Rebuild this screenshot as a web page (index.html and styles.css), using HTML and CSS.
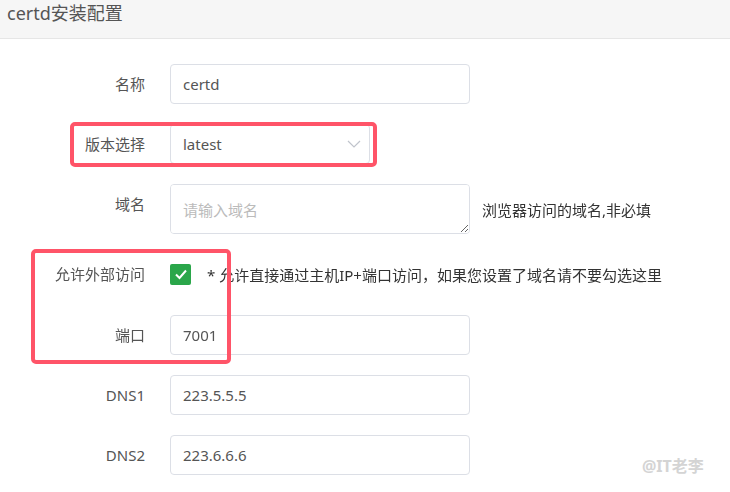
FILE: index.html
```html
<!DOCTYPE html>
<html lang="zh">

<head>
    <meta charset="UTF-8">
    <meta name="viewport" content="width=device-width, initial-scale=1.0">
    <title>certd安装配置</title>
    <link rel="stylesheet" href="styles.css">
</head>

<body>
    <div class="header">
        <h1 class="title">certd安装配置</h1>
    </div>

    <form class="form">
        <div class="row">
            <label class="label">名称</label>
            <div class="field"><input class="input" type="text" value="certd"></div>
        </div>
        <div class="row">
            <label class="label">版本选择</label>
            <div class="field">
                <div class="select">
                    <span>latest</span>
                    <svg class="arrow" width="14" height="8" viewBox="0 0 14 8">
                        <path d="M1 1 L7 7 L13 1" fill="none" stroke="#c0c4cc" stroke-width="1.2"/>
                    </svg>
                </div>
            </div>
        </div>
        <div class="row row-area">
            <label class="label">域名</label>
            <div class="field">
                <textarea class="input textarea" placeholder="请输入域名"></textarea>
                <span class="hint">浏览器访问的域名,非必填</span>
            </div>
        </div>
        <div class="row row-check">
            <label class="label">允许外部访问</label>
            <div class="field">
                <span class="checkbox">
                    <svg width="14" height="12" viewBox="0 0 14 12">
                        <path d="M2 6.5 L5.5 10 L12 2.5" fill="none" stroke="#fff" stroke-width="2"/>
                    </svg>
                </span>
                <span class="hint check-hint">* 允许直接通过主机IP+端口访问，如果您设置了域名请不要勾选这里</span>
            </div>
        </div>
        <div class="row">
            <label class="label">端口</label>
            <div class="field"><input class="input" type="text" value="7001"></div>
        </div>
        <div class="row">
            <label class="label">DNS1</label>
            <div class="field"><input class="input" type="text" value="223.5.5.5"></div>
        </div>
        <div class="row">
            <label class="label">DNS2</label>
            <div class="field"><input class="input" type="text" value="223.6.6.6"></div>
        </div>
    </form>

    <div class="mark mark-version"></div>
    <div class="mark mark-access"></div>
    <div class="watermark">@IT老李</div>
</body>

</html>
```

FILE: styles.css
```css
* {
    margin: 0;
    padding: 0;
    box-sizing: border-box;
}

body {
    width: 730px;
    height: 492px;
    overflow: hidden;
    position: relative;
    background: #fff;
    font-family: "Noto Sans", "Noto Sans CJK SC", sans-serif;
    color: #555;
}

.header {
    height: 39px;
    background: #f6f6f6;
    border-bottom: 1px solid #e6e6e6;
    padding: 0 7px;
}

.title {
    font-size: 18px;
    font-weight: normal;
    line-height: 27px;
    color: #555;
}

.form {
    display: flex;
    flex-direction: column;
    gap: 20px;
    padding-top: 25px;
}

.row {
    display: grid;
    grid-template-columns: 145px 1fr;
    column-gap: 25px;
    align-items: start;
}

.row-check {
    height: 41px;
}

.label {
    text-align: right;
    font-size: 15px;
    line-height: 40px;
    color: #555;
}

.field {
    display: flex;
    align-items: center;
    min-height: 40px;
}

.input {
    width: 300px;
    height: 40px;
    border: 1px solid #dcdfe6;
    border-radius: 4px;
    padding: 0 12px;
    font-family: "Noto Sans", "Noto Sans CJK SC", sans-serif;
    font-size: 15px;
    color: #555;
    outline: none;
}

.textarea {
    height: 50px;
    padding: 12px 12px;
    font-size: 15px;
    line-height: 26px;
    resize: vertical;
}

.textarea::placeholder {
    color: #bbb;
}

.select {
    width: 200px;
    height: 40px;
    border: 1px solid #dcdfe6;
    border-radius: 4px;
    padding: 0 8px 0 12px;
    display: flex;
    align-items: center;
    justify-content: space-between;
    font-size: 15px;
}

.hint {
    font-size: 15px;
    color: #333;
    margin-left: 12px;
}

.checkbox {
    width: 21px;
    height: 21px;
    border-radius: 2px;
    background: #2aa64a;
    display: flex;
    align-items: center;
    justify-content: center;
}

.check-hint {
    margin-left: 16px;
}

.mark {
    position: absolute;
    border: 4px solid #ff5468;
    border-radius: 5px;
}

.mark-version {
    left: 70px;
    top: 122px;
    width: 307px;
    height: 45px;
}

.mark-access {
    left: 31px;
    top: 249px;
    width: 200px;
    height: 115px;
}

.watermark {
    position: absolute;
    left: 642px;
    top: 453px;
    font-size: 16px;
    font-weight: bold;
    color: #d4d4d4;
}
```
